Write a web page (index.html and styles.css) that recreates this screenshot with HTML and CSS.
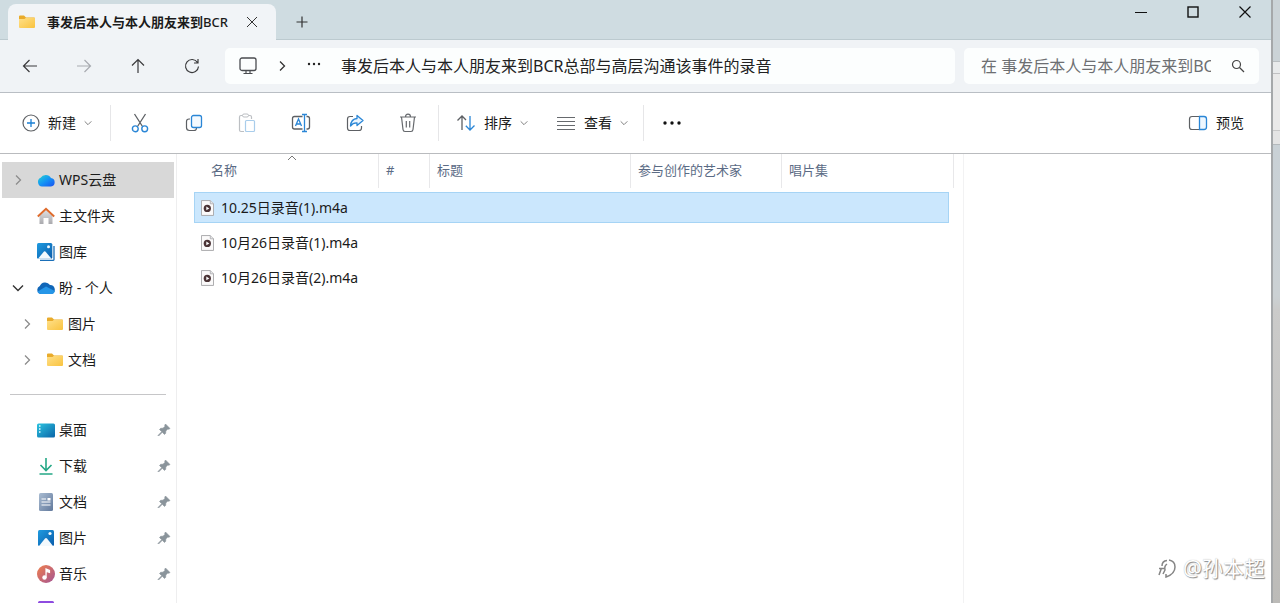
FILE: index.html
```html
<!DOCTYPE html>
<html lang="zh-CN">
<head>
<meta charset="utf-8">
<title>文件资源管理器</title>
<meta name="viewport" content="width=device-width, initial-scale=1">
<link rel="stylesheet" href="styles.css">
</head>
<body>
<svg class="defs" aria-hidden="true">
  <defs>
    <linearGradient id="g-folder" x1="0" y1="0" x2="1" y2="1"><stop offset="0" stop-color="#ffe08a"/><stop offset="1" stop-color="#f9c33f"/></linearGradient>
    <linearGradient id="g-wps" x1="0" y1="0" x2="1" y2="1"><stop offset="0" stop-color="#25d5cf"/><stop offset=".5" stop-color="#1493f5"/><stop offset="1" stop-color="#1a50f0"/></linearGradient>
    <linearGradient id="g-pic" x1="0" y1="0" x2="1" y2="1"><stop offset="0" stop-color="#1f9be0"/><stop offset="1" stop-color="#0a5cab"/></linearGradient>
    <linearGradient id="g-desk" x1="0" y1="0" x2="1" y2="1"><stop offset="0" stop-color="#2cc4e0"/><stop offset="1" stop-color="#0a64a8"/></linearGradient>
    <linearGradient id="g-doc" x1="0" y1="0" x2="1" y2="1"><stop offset="0" stop-color="#a9bcd2"/><stop offset="1" stop-color="#62799c"/></linearGradient>
    <linearGradient id="g-music" x1="0" y1="0" x2="1" y2="1"><stop offset="0" stop-color="#f07f4c"/><stop offset="1" stop-color="#a45595"/></linearGradient>
    <linearGradient id="g-wall" x1="0" y1="0" x2="0" y2="1"><stop offset="0" stop-color="#e4e4e6"/><stop offset="1" stop-color="#aaaaae"/></linearGradient>
    <symbol id="folder" viewBox="0 0 18 16"><path d="M1 2.5Q1 1.5 2 1.5H6L8 3.5H16Q17 3.5 17 4.500V7H1Z" fill="#e9ab2b"/><path d="M1 5H6.500L8 3.700H16.500Q17 3.700 17 4.500V13Q17 14 16 14H2Q1 14 1 13Z" fill="url(#g-folder)"/></symbol>
    <symbol id="right" viewBox="0 0 12 12"><path d="M4 1.500 8.500 6 4 10.500" fill="none" stroke="currentColor" stroke-width="1.300"/></symbol>
    <symbol id="down" viewBox="0 0 12 12"><path d="M1 3.500 6 8.500 11 3.500" fill="none" stroke="currentColor" stroke-width="1.400"/></symbol>
    <symbol id="pin" viewBox="0 0 14 14"><path d="M8.500 1 13 5.500 11.800 6.300 10.800 6 8.800 8 8.700 10.300 7.500 11.500 5.300 9.300 1.600 13 1 12.400 4.700 8.700 2.500 6.500 3.700 5.300 6 5.200 8 3.200 7.700 2.200Z" fill="#8a949b" stroke="#8a949b" stroke-width=".6"/></symbol>
    <symbol id="media" viewBox="0 0 14 17"><path d="M.5.500H10L13.500 4V16.500H.5Z" fill="#fbfafa" stroke="#a5a5a8"/><path d="M10 .5V4H13.500" fill="#e5e5e7" stroke="#a5a5a8" stroke-width=".8"/><circle cx="6.800" cy="9" r="3.900" fill="#4b3436"/><path d="M5.700 7V11L9 9Z" fill="#fff"/></symbol>
    <symbol id="photo" viewBox="0 0 18 18"><rect x="1" y="1" width="16" height="16" rx="1.500" fill="url(#g-pic)"/><path d="M2 17 8 9.500Q9 8.500 10 9.500L16 17Z" fill="#f3f9fd"/><circle cx="13" cy="4.500" r="1.600" fill="#f3f9fd"/></symbol>
  </defs>
</svg>

<div class="desktop">
<main class="window">
  <header class="titlebar">
    <div class="tab">
      <svg class="i18"><use href="#folder"/></svg>
      <span class="tab-title">事发后本人与本人朋友来到<span class="latin">BCR</span></span>
      <button class="plain" aria-label="关闭标签页"><svg width="12" height="12" viewBox="0 0 12 12"><path d="M1 1 11 11M11 1 1 11" stroke="#333" fill="none"/></svg></button>
    </div>
    <button class="plain new-tab" aria-label="新标签页"><svg width="12" height="12" viewBox="0 0 12 12"><path d="M6 .5V11.500M.5 6H11.500" stroke="#333" stroke-width="1.200"/></svg></button>
    <div class="controls">
      <button class="plain" aria-label="最小化"><svg width="12" height="12" viewBox="0 0 12 12"><path d="M0 6.500H12" stroke="#111"/></svg></button>
      <button class="plain" aria-label="最大化"><svg width="12" height="12" viewBox="0 0 12 12"><rect x="1" y="1" width="10" height="10" fill="none" stroke="#111" stroke-width="1.400"/></svg></button>
      <button class="plain" aria-label="关闭"><svg width="12" height="12" viewBox="0 0 12 12"><path d="M.5.500 11.500 11.500M11.500.5.500 11.500" stroke="#111" stroke-width="1.200"/></svg></button>
    </div>
  </header>

  <nav class="navbar" aria-label="导航">
    <div class="nav-buttons">
      <button class="plain" aria-label="后退"><svg width="16" height="16" viewBox="0 0 16 16"><path d="M15 8H1.500M7.500 2 1.500 8 7.500 14" fill="none" stroke="#3a3a3c" stroke-width="1.200"/></svg></button>
      <button class="plain" aria-label="前进"><svg width="16" height="16" viewBox="0 0 16 16"><path d="M1 8H14.500M8.500 2 14.500 8 8.500 14" fill="none" stroke="#a8abb0" stroke-width="1.200"/></svg></button>
      <button class="plain" aria-label="向上"><svg width="16" height="16" viewBox="0 0 16 16"><path d="M8 15V1.500M2 7.500 8 1.500 14 7.500" fill="none" stroke="#3a3a3c" stroke-width="1.200"/></svg></button>
      <button class="plain" aria-label="刷新"><svg width="16" height="16" viewBox="0 0 16 16"><path d="M13.500 4.500A6.500 6.500 0 1 0 14.500 8.500M14 1V5H10" fill="none" stroke="#3a3a3c" stroke-width="1.200"/></svg></button>
    </div>
    <div class="address">
      <button class="plain" aria-label="此电脑"><svg width="18" height="18" viewBox="0 0 18 18"><rect x="1" y="1" width="16" height="12.500" rx="2" fill="none" stroke="#4a4c50" stroke-width="1.300"/><path d="M7 13.500V16M11 13.500V16M4.500 16.500H13.500" stroke="#4a4c50" stroke-width="1.200"/></svg></button>
      <svg class="i12 dark"><use href="#right"/></svg>
      <button class="plain" aria-label="更多路径"><svg width="14" height="8" viewBox="0 0 14 8"><g fill="#222"><circle cx="2" cy="2" r="1.200"/><circle cx="7" cy="2" r="1.200"/><circle cx="12" cy="2" r="1.200"/></g></svg></button>
      <button class="plain crumb">事发后本人与本人朋友来到BCR总部与高层沟通该事件的录音</button>
    </div>
    <div class="search">
      <input type="text" aria-label="搜索" placeholder="在 事发后本人与本人朋友来到BCR总部与高层沟通该事件的录音 中搜索">
      <svg width="14" height="14" viewBox="0 0 14 14"><circle cx="5.500" cy="5.500" r="4" fill="none" stroke="#444" stroke-width="1.200"/><path d="M8.500 8.500 13 13" stroke="#444" stroke-width="1.300"/></svg>
    </div>
  </nav>

  <div class="toolbar" role="toolbar" aria-label="命令">
    <button class="plain new"><svg width="18" height="18" viewBox="0 0 18 18"><circle cx="9" cy="9" r="8" fill="none" stroke="#5d6064" stroke-width="1.200"/><path d="M9 5V13M5 9H13" stroke="#1a7fd4" stroke-width="1.300"/></svg><span>新建</span><svg class="i8"><use href="#down"/></svg></button>
    <div class="edit">
      <button class="plain" aria-label="剪切"><svg width="18" height="20" viewBox="0 0 18 20"><path d="M3.500 1 11.500 13.500M14.500 1 6.500 13.500" stroke="#5d6064" stroke-width="1.300"/><circle cx="4.300" cy="15.800" r="2.900" fill="none" stroke="#2a86d6" stroke-width="1.400"/><circle cx="13.700" cy="15.800" r="2.900" fill="none" stroke="#2a86d6" stroke-width="1.400"/></svg></button>
      <button class="plain" aria-label="复制"><svg width="18" height="18" viewBox="0 0 18 18"><path d="M5 5H4Q1.500 5 1.500 7.500V13.500Q1.500 16.500 4.500 16.500H9Q11.500 16.500 11.500 14" fill="none" stroke="#5d6064" stroke-width="1.200"/><rect x="6.500" y="1.500" width="10" height="12" rx="2" fill="#f4faff" stroke="#2a86d6" stroke-width="1.300"/></svg></button>
      <button class="plain" aria-label="粘贴" disabled><svg width="18" height="20" viewBox="0 0 18 20"><path d="M6 18.500H3Q1.500 18.500 1.500 17V4Q1.500 2.500 3 2.500H12Q13.500 2.500 13.500 4V6" fill="none" stroke="#bcbfc3" stroke-width="1.200"/><rect x="4.500" y="1" width="6" height="3" rx="1.500" fill="#fff" stroke="#bcbfc3"/><rect x="7.500" y="7.500" width="9" height="11" rx="1" fill="#fff" stroke="#a9cdeb" stroke-width="1.200"/></svg></button>
      <button class="plain" aria-label="重命名"><svg width="20" height="20" viewBox="0 0 20 20"><path d="M11.500 3.500H3.500Q1.500 3.500 1.500 5.500V14Q1.500 16 3.500 16H11.500M15.500 3.500H16.500Q18.500 3.500 18.500 5.500V14Q18.500 16 16.500 16H15.500" fill="none" stroke="#5d6064" stroke-width="1.300"/><path d="M4.500 13 7.500 6 10.500 13M5.500 11H9.500M11 1.500H16M11 18.500H16M13.500 1.500V18.500" fill="none" stroke="#2a86d6" stroke-width="1.300"/></svg></button>
      <button class="plain" aria-label="共享"><svg width="18" height="18" viewBox="0 0 18 18"><path d="M7 2.500H4Q1.500 2.500 1.500 5V14Q1.500 16.500 4 16.500H13Q15.500 16.500 15.500 14V12" fill="none" stroke="#5d6064" stroke-width="1.200"/><path d="M11 1.500 17 6.500 11 11.500V8.800Q7 8.500 4.500 12Q5 5 11 4.500Z" fill="#eaf5ff" stroke="#2a86d6" stroke-width="1.300" stroke-linejoin="round"/></svg></button>
      <button class="plain" aria-label="删除"><svg width="18" height="20" viewBox="0 0 18 20"><path d="M1 4H17M6.500 4Q6.500 1.200 9 1.200T11.500 4M2.500 4 4 16.500Q4.200 18.500 6 18.500H12Q13.800 18.500 14 16.500L15.500 4M7.300 8V14.500M10.700 8V14.500" fill="none" stroke="#66696d" stroke-width="1.200"/></svg></button>
    </div>
    <div class="arrange">
      <button class="plain"><svg width="20" height="18" viewBox="0 0 20 18"><path d="M6 16V2M1.500 6.500 6 2 10 6" fill="none" stroke="#5d6064" stroke-width="1.300"/><path d="M14 2V16M9.800 11.800 14 16 18.500 11.500" fill="none" stroke="#2a86d6" stroke-width="1.300"/></svg><span>排序</span><svg class="i8"><use href="#down"/></svg></button>
      <button class="plain"><svg width="20" height="16" viewBox="0 0 20 16"><path d="M1 2.500H19M1 6.500H19M1 10.500H19M1 14.500H19" stroke="#66696d"/></svg><span>查看</span><svg class="i8"><use href="#down"/></svg></button>
    </div>
    <button class="plain more" aria-label="查看更多"><svg width="18" height="4" viewBox="0 0 18 4"><g fill="#111"><circle cx="2" cy="2" r="1.700"/><circle cx="9" cy="2" r="1.700"/><circle cx="16" cy="2" r="1.700"/></g></svg></button>
    <button class="plain preview-btn"><svg width="20" height="16" viewBox="0 0 20 16"><path d="M11 1.500H4Q1.500 1.500 1.500 4V12Q1.500 14.500 4 14.500H11" fill="none" stroke="#5d6064" stroke-width="1.200"/><path d="M11.500 1.500H16Q18.500 1.500 18.500 4V12Q18.500 14.500 16 14.500H11.500Z" fill="#eef7ff" stroke="#2a86d6" stroke-width="1.300"/></svg><span>预览</span></button>
  </div>

  <div class="panes">
    <aside class="sidebar">
      <ul class="tree">
        <li class="row active"><svg class="i12 exp"><use href="#right"/></svg><svg class="i18" viewBox="0 0 18 18"><path d="M5 15.500A4.600 4.600 0 0 1 3.600 6.800 6 6 0 0 1 14 7 4.300 4.300 0 0 1 14 15.500Z" fill="url(#g-wps)"/></svg><a href="#">WPS云盘</a></li>
        <li class="row"><span class="i12"></span><svg class="i18" viewBox="0 0 18 18"><path d="M2.500 8 9 2 15.500 8V17H11.500V11H6.500V17H2.500Z" fill="url(#g-wall)"/><path d="M.8 9.500 9 1.800 17.200 9.500" fill="none" stroke="#df6b2c" stroke-width="1.900"/></svg><a href="#">主文件夹</a></li>
        <li class="row"><span class="i12"></span><svg class="i18" viewBox="0 0 18 18"><path d="M17 3V16.500Q17 17.300 16.300 17.300H3" fill="none" stroke="#1a6fb8" stroke-width="1.300"/><rect width="15.300" height="15.700" rx="1.500" fill="url(#g-pic)"/><path d="M1 15.700 7 8.500Q7.700 7.800 8.400 8.500L14.500 15.700Z" fill="#f3f9fd"/><circle cx="11.500" cy="3.800" r="1.500" fill="#f3f9fd"/></svg><a href="#">图库</a></li>
        <li class="row"><svg class="i12 exp dark"><use href="#down"/></svg><svg class="i18" viewBox="0 0 18 18"><path d="M4 15A4.200 4.200 0 0 1 2.800 7 5.800 5.800 0 0 1 13 6 4.600 4.600 0 0 1 14.500 15Z" fill="#1066b8"/><path d="M4 15Q1.200 14.800.3 12.800L9 7.500 17.800 12Q17.300 15 14.500 15Z" fill="#2596e8"/></svg><a href="#">盼 - 个人</a></li>
        <li class="row nested"><svg class="i12 exp"><use href="#right"/></svg><svg class="i18"><use href="#folder"/></svg><a href="#">图片</a></li>
        <li class="row nested"><svg class="i12 exp"><use href="#right"/></svg><svg class="i18"><use href="#folder"/></svg><a href="#">文档</a></li>
      </ul>
      <hr>
      <ul class="tree">
        <li class="row"><span class="i12"></span><svg class="i18" viewBox="0 0 18 18"><rect y="2.500" width="18" height="14" rx="1.500" fill="url(#g-desk)"/><path d="M2 5H3.500M2 8H3.500M2 11H3.500" stroke="#e8fbff" stroke-width="1.300"/></svg><a href="#">桌面</a><svg class="pin"><use href="#pin"/></svg></li>
        <li class="row"><span class="i12"></span><svg class="i18" viewBox="0 0 18 18"><path d="M9 1V13M3.500 8 9 13.500 14.500 8M2.500 17H15.500" fill="none" stroke="#25a886" stroke-width="1.600"/></svg><a href="#">下载</a><svg class="pin"><use href="#pin"/></svg></li>
        <li class="row"><span class="i12"></span><svg class="i18" viewBox="0 0 18 18"><rect x="2" width="14" height="18" rx="1.500" fill="url(#g-doc)"/><path d="M4.500 6H9M4.500 9H13.500M4.500 12H13.500" stroke="#fff" stroke-width="1.200"/><rect x="10.500" y="5" width="3" height="2.500" fill="#fff"/></svg><a href="#">文档</a><svg class="pin"><use href="#pin"/></svg></li>
        <li class="row"><span class="i12"></span><svg class="i18"><use href="#photo"/></svg><a href="#">图片</a><svg class="pin"><use href="#pin"/></svg></li>
        <li class="row"><span class="i12"></span><svg class="i18" viewBox="0 0 18 18"><circle cx="9" cy="9" r="9" fill="url(#g-music)"/><path d="M9 12.500V4L12.500 5.500V7.500L9.500 6.500" fill="#fff" stroke="#fff" stroke-width="1.200"/><circle cx="7.500" cy="12.500" r="2.200" fill="#fff"/></svg><a href="#">音乐</a><svg class="pin"><use href="#pin"/></svg></li>
        <li class="row"><span class="i12"></span><svg class="i18" viewBox="0 0 18 18"><rect x="1" y="0" width="16" height="16" rx="1.500" fill="#8e4be0"/><path d="M7 5V11L12 8Z" fill="#fff"/></svg></li>
      </ul>
    </aside>

    <section class="files">
      <svg class="sort" viewBox="0 0 10 6"><path d="M1 5 5 1 9 5" fill="none" stroke="#777"/></svg>
      <table>
        <colgroup><col class="c-name"><col class="c-num"><col class="c-title"><col class="c-artist"><col></colgroup>
        <thead><tr><th>名称</th><th>#</th><th>标题</th><th>参与创作的艺术家</th><th>唱片集</th></tr></thead>
        <tbody>
          <tr class="selected"><td colspan="5"><div class="file"><svg><use href="#media"/></svg>10.25日录音(1).m4a</div></td></tr>
          <tr><td colspan="5"><div class="file"><svg><use href="#media"/></svg>10月26日录音(1).m4a</div></td></tr>
          <tr><td colspan="5"><div class="file"><svg><use href="#media"/></svg>10月26日录音(2).m4a</div></td></tr>
        </tbody>
      </table>
    </section>
    <section class="preview" aria-label="预览窗格"></section>
  </div>
  <div class="watermark"><svg width="20" height="24" viewBox="0 0 20 24"><path d="M2 19 4.500 12M2 12.500H7M5 10Q5 5 10 4.500M12 4Q18 5 18 11 18 18 9 21L9 18M10 8Q7 10 8 14L6 18" fill="none" stroke="#858585" stroke-width="1.500"/></svg><span>@孙本超</span></div>
</main>
<div class="behind"><div class="behind-title"></div><div class="behind-bar"></div><div class="behind-body"></div><div class="behind-foot"></div><div class="behind-rest"></div></div>
</div>
</body>
</html>
```
FILE: styles.css
```css
* { box-sizing: border-box; }
body {
  margin: 0;
  font-family: "Noto Sans", "Noto Sans CJK SC", sans-serif;
  font-size: 14px;
  line-height: 20px;
  color: #1b1b1b;
}
svg { display: block; flex: none; }
.defs { position: absolute; width: 0; height: 0; }
.plain {
  display: flex;
  align-items: center;
  justify-content: center;
  padding: 0;
  border: 0;
  background: none;
  color: inherit;
  font: inherit;
  white-space: nowrap;
}
.i8 { width: 8px; height: 8px; color: #777; }
.i12 { width: 12px; height: 12px; flex: none; }
.i18 { width: 18px; height: 18px; }
.dark { color: #333; }

.desktop { display: flex; height: 100vh; overflow: hidden; }
.window {
  position: relative;
  flex: 1;
  min-width: 0;
  display: flex;
  flex-direction: column;
  background: #fff;
}

.titlebar {
  display: flex;
  height: 40px;
  padding-left: 8px;
  background: #cfdce1;
  box-shadow: inset 0 -1px #bccacf;
}
.tab {
  display: flex;
  align-items: center;
  width: 268px;
  margin-top: 4px;
  padding: 0 18px 0 10px;
  border-radius: 8px 8px 0 0;
  background: #f1f4f7;
}
.tab-title {
  flex: 1;
  margin: 0 14px 0 11px;
  overflow: hidden;
  white-space: nowrap;
  font-size: 13px;
  font-weight: 700;
}
.latin { font-weight: 500; }
.new-tab { width: 52px; margin-top: 4px; }
.controls { display: flex; height: 24px; margin-left: auto; }
.controls .plain { width: 52px; }

.navbar {
  display: flex;
  align-items: center;
  gap: 9px;
  height: 53px;
  padding-right: 12px;
  border-bottom: 1px solid #b9bec4;
  background: #f0f3f6;
}
.nav-buttons { display: flex; width: 216px; padding-left: 3px; }
.nav-buttons .plain { flex: none; width: 54px; height: 36px; }
.address, .search {
  display: flex;
  align-items: center;
  height: 36px;
  border-radius: 5px;
  background: #fcfefe;
}
.address { flex: 1; min-width: 0; gap: 19px; padding-left: 14px; font-size: 16px; }
.crumb { margin-left: 1px; color: #222; }
.search { width: 295px; padding: 0 14px 0 17px; gap: 20px; }
.search input {
  flex: 1;
  min-width: 0;
  padding: 0;
  border: 0;
  background: none;
  font: inherit;
  font-size: 16px;
}
.search input::placeholder { color: #6d6f72; opacity: 1; }

.toolbar {
  display: flex;
  align-items: center;
  height: 61px;
  padding: 0 27px 0 22px;
  border-bottom: 1px solid #b9bbbe;
}
.new, .edit, .arrange { height: 36px; border-right: 1px solid #e6e6e8; }
.toolbar .plain { gap: 8px; }
.toolbar .new {
  justify-content: flex-start;
  width: 89px;
  border-right: 1px solid #e6e6e8;
}
.edit { display: flex; width: 328px; padding: 0 3px 0 2px; }
.edit .plain { flex: 1; }
.arrange { display: flex; gap: 28px; width: 205px; padding-left: 17px; }
.more { width: 55px; }
.preview-btn { margin-left: auto; }

.panes { flex: 1; display: flex; min-height: 0; }
.sidebar {
  width: 177px;
  padding: 8px 2px 0;
  overflow: hidden;
  border-right: 1px solid #eeeeef;
}
.tree { margin: 0; padding: 0; list-style: none; }
.row {
  display: flex;
  align-items: center;
  height: 36px;
  padding: 0 3px 0 10px;
}
.row > .i18 { margin: 0 4px 0 13px; }
.row a { color: inherit; text-decoration: none; white-space: nowrap; }
.row.nested { padding-left: 19px; }
.active { background: #d8d8d8; }
.exp { color: #8c8c8c; }
.exp.dark { color: #333; }
.pin { width: 14px; height: 14px; margin-left: auto; }
.sidebar hr {
  height: 1px;
  margin: 16px 8px 17px;
  border: 0;
  background: #c6c6c8;
}

.files { position: relative; flex: 1; min-width: 0; padding: 0 14px 0 17px; }
.sort { position: absolute; top: 1px; left: 110px; width: 10px; height: 6px; }
table {
  width: 100%;
  margin-top: -4px;
  border-spacing: 0 4px;
  table-layout: fixed;
}
.c-name { width: 185px; }
.c-num { width: 51px; }
.c-title { width: 201px; }
.c-artist { width: 151px; }
th {
  position: relative;
  height: 34px;
  padding: 0 0 3px 7px;
  border-right: 1px solid #e8e8ea;
  color: #5b6b85;
  font-size: 13px;
  font-weight: 400;
  text-align: left;
  white-space: nowrap;
}
th:first-child { padding-left: 17px; }
th:last-child { border-right: 0; }
th:last-child::after {
  content: "";
  position: absolute;
  top: 0;
  right: -5px;
  bottom: 0;
  width: 1px;
  background: #e8e8ea;
}
td { padding: 0; border: 1px solid transparent; }
.selected td { border-color: #a6d4f5; background: #cbe7fd; }
.file {
  display: flex;
  align-items: center;
  gap: 7px;
  height: 29px;
  padding-left: 6px;
}
.file svg { width: 13px; height: 16px; }

.preview { width: 308px; border-left: 1px solid #f2f2f3; }

.watermark {
  position: absolute;
  right: 6px;
  bottom: 20px;
  display: flex;
  align-items: center;
  gap: 6px;
  color: #fff;
  font-size: 21px;
  line-height: 30px;
  text-shadow: 1px 1px 1px #888, 0 0 1px #aaa;
}

.behind {
  display: flex;
  flex-direction: column;
  width: 9px;
  border-left: 2px solid #a5a8aa;
}
.behind-title { height: 62px; background: #cbd3d7; border-bottom: 1px solid #b9bec1; }
.behind-bar { height: 12px; background: #e8eaeb; border-bottom: 1px solid #c0c0c2; }
.behind-body { height: 57px; background: #e9e9e9; border-bottom: 1px solid #c8c8c8; }
.behind-foot { height: 14px; background: #e4e4e4; border-bottom: 1px solid #b4b9bc; }
.behind-rest { flex: 1; background: linear-gradient(#c9d1d6, #cbd1d4 33%, #cbcbca 36%, #bcbbb8); }
```
